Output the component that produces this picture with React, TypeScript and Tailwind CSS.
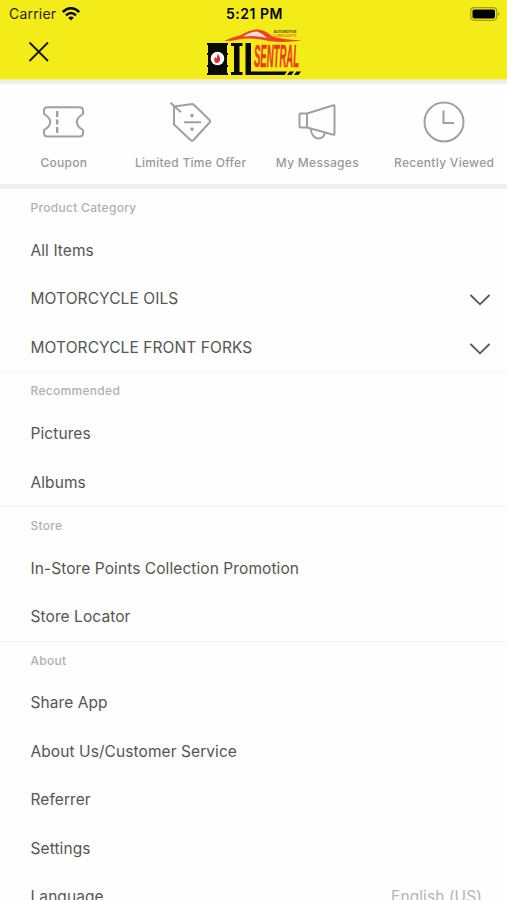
import type { ReactNode } from 'react';

interface Shortcut {
  label: string;
  icon: ReactNode;
}

interface MenuItem {
  label: string;
  expandable?: boolean;
  value?: string;
}

interface MenuSection {
  title: string;
  items: MenuItem[];
}

const shortcuts: Shortcut[] = [
  {
    label: 'Coupon',
    icon: (
      <>
        <path d="M6.500 7.200H38.500Q42 7.200 42 10.700V14Q35.800 17.500 35.800 22T42 30V33Q42 36.500 38.500 36.500H6.500Q3 36.500 3 33V30Q9.200 26.500 9.200 22T3 14V10.700Q3 7.200 6.500 7.200" />
        <path d="M16.200 11v6M16.200 19.500v5M16.200 27v6" strokeWidth="2.400" />
      </>
    ),
  },
  {
    label: 'Limited Time Offer',
    icon: (
      <>
        <path d="M6 6.500L24.500 4Q26 4.500 42 20.500Q42.500 21.500 42 22L25.500 40Q24 41.500 22.500 40L6 24.500Z" />
        <path d="M2.500 2.800L13 12.300M16 22.300h17" />
        <path d="M24 15.500v.1M24 29v.1" strokeWidth="3.600" strokeLinecap="round" />
      </>
    ),
  },
  {
    label: 'My Messages',
    icon: (
      <>
        <path d="M5 13.500h7L38.500 5.200Q39.500 5 39.500 6V34Q39.500 35 38.500 34.700L12 27.500H5.500Q4.500 27.500 4.500 26.500V14Q4.500 13.500 5 13.500ZM12 13.500v14" />
        <path d="M16 28.700c-.5 5 3 9.800 7.500 9.800 3.500 0 5.500-2.200 6.500-5.700" />
      </>
    ),
  },
  {
    label: 'Recently Viewed',
    icon: (
      <>
        <circle cx="22" cy="22" r="19.500" />
        <path d="M21.500 10.500V23H32" />
      </>
    ),
  },
];

const sections: MenuSection[] = [
  {
    title: 'Product Category',
    items: [
      { label: 'All Items' },
      { label: 'MOTORCYCLE OILS', expandable: true },
      { label: 'MOTORCYCLE FRONT FORKS', expandable: true },
    ],
  },
  {
    title: 'Recommended',
    items: [{ label: 'Pictures' }, { label: 'Albums' }],
  },
  {
    title: 'Store',
    items: [{ label: 'In-Store Points Collection Promotion' }, { label: 'Store Locator' }],
  },
  {
    title: 'About',
    items: [
      { label: 'Share App' },
      { label: 'About Us/Customer Service' },
      { label: 'Referrer' },
      { label: 'Settings' },
      { label: 'Language', value: 'English (US)' },
    ],
  },
];

function Logo() {
  return (
    <svg width="98" height="50" viewBox="0 0 98 50" className="shrink-0 overflow-visible">
      {/* Car silhouette */}
      <path d="M19 13Q28 9 36 7Q44 2 52 1.300Q60 2 67 8Q73 11 97 12.500Q78 15 64 13Q48 9 33 11.500Q27 13 19 13Z" fill="#ee4426" />
      <path d="M38 8.500Q46 3.500 52 3.500Q57 5 62 10Q50 7 38 8.500Z" fill="#f5dede" />
      <text x="68.500" y="4.500" textLength="23" lengthAdjust="spacingAndGlyphs" fontSize="4" fontWeight="700" fill="#4b4917" fontFamily="Inter, sans-serif">AUTOMOTIVE</text>
      <text x="68.500" y="9" textLength="23" lengthAdjust="spacingAndGlyphs" fontSize="4" fontWeight="600" fill="#ef7325" fontFamily="Inter, sans-serif">LUBRICANTS</text>
      {/* Oil drum */}
      <path d="M2 15h21v2h-1v8h1v2h-1v10h1v2h-1v6h1v2H2v-2h1v-6H2v-2h1V27H2v-2h1v-8H2Z" fill="#090909" />
      <circle cx="12.500" cy="30.500" r="6.800" fill="#fff" />
      <path d="M12.500 25.500q4 5 2 8q-3 3-5 0q-1-3 1-5q0 2 1 2q1-2 1-5Z" fill="#e62b24" />
      {/* Lettering */}
      <path d="M26 15h11.500v3H34.500v26h3v3H26v-3h3V18h-3ZM40.500 15h5.500v28.500h36l-2.500 3.500H40.500Z" fill="#090909" />
      <path d="M84.500 43.500h4.500l-2.500 3.500h-4.500ZM91.500 43.500h4.500l-2.500 3.500h-4.500Z" fill="#090909" />
      <text x="49" y="38.500" textLength="45" lengthAdjust="spacingAndGlyphs" fontSize="32" fontWeight="700" fontStyle="italic" fill="#e93b22" stroke="#e93b22" strokeWidth=".5" fontFamily="'Liberation Sans', sans-serif">SENTRAL</text>
    </svg>
  );
}

export default function App() {
  return (
    <div className="h-[900px] w-full overflow-hidden bg-[#fefefe] font-['Inter',sans-serif] text-[#555555]">
      <header className="h-20 border-b border-[#f3eea0] bg-[#f3ec19] text-black">
        {/* Status bar */}
        <div className="grid h-[27px] grid-cols-3 items-center pl-[9px] pr-[7px]">
          <div className="flex items-center gap-1.5 text-[14px] text-[#292808]">
            <span className="tracking-[0.2px]">Carrier</span>
            <svg width="18" height="14" viewBox="0 0 18 14" fill="none" stroke="#080800" strokeWidth="2.400">
              <path d="M.8 5Q9-2.500 17.200 5M4 8.300Q9 3.800 14 8.300" />
              <path d="M6.200 10.700Q9 8.300 11.800 10.700L9 13.500Z" fill="#080800" stroke="none" />
            </svg>
          </div>
          <span className="text-center text-[14px] font-semibold tracking-[0.5px]">5:21 PM</span>
          <svg width="30" height="14" viewBox="0 0 30 14" className="justify-self-end">
            <rect x=".7" y=".7" width="26" height="12.600" rx="3.500" fill="none" stroke="#a39d17" strokeWidth="1.200" />
            <rect x="2.500" y="2.500" width="22.500" height="9" rx="1.800" fill="#000" />
            <path d="M28 5q3 2 0 4Z" fill="#a39d17" />
          </svg>
        </div>
        <div className="grid h-[51px] grid-cols-3 items-center">
          <button aria-label="Close" className="mb-px ml-7 w-fit">
            <svg width="22" height="22" viewBox="0 0 22 22" fill="none" stroke="#17160a" strokeWidth="1.800">
              <path d="M1.500 1.500l18.500 18.500M20 1.500L1.500 20" />
            </svg>
          </button>
          <div className="flex justify-center">
            <Logo />
          </div>
        </div>
      </header>

      {/* Shortcuts */}
      <nav className="grid h-[109px] grid-cols-4 border-b-[5px] border-t-4 border-[#efefef]">
        {shortcuts.map((shortcut) => (
          <div key={shortcut.label} className="flex flex-col items-center pt-4">
            <svg
              width="44"
              height="44"
              viewBox="0 0 44 44"
              fill="none"
              stroke="#a0a0a0"
              strokeWidth="2"
              strokeLinejoin="round"
            >
              {shortcut.icon}
            </svg>
            <span className="mt-[11px] whitespace-nowrap pl-px text-[12px] font-medium leading-4 tracking-[0.3px] text-[#999999]">
              {shortcut.label}
            </span>
          </div>
        ))}
      </nav>

      {sections.map((section) => (
        <section key={section.title} className="border-b border-[#f3f3f3]">
          <h2 className="h-[36.7px] pl-[30.5px] pt-[11px] text-[12px] font-medium leading-4 tracking-[0.3px] text-[#b0b0b0]">
            {section.title}
          </h2>
          <ul>
            {section.items.map((item) => (
              <li key={item.label} className="flex h-[48.5px] items-center justify-between pl-[30.5px] pr-4 pt-px">
                <span className="text-[15.5px] tracking-[0.08px]">{item.label}</span>
                {item.expandable && (
                  <svg width="22" height="12" viewBox="0 0 22 12" fill="none" stroke="#555555" strokeWidth="1.800" className="mt-[3px]">
                    <path d="M1.500 1L11 10.300L20.500 1" />
                  </svg>
                )}
                {item.value && <span className="pr-[9px] text-[15.5px] tracking-[0.08px] text-[#b5b5b5]">{item.value}</span>}
              </li>
            ))}
          </ul>
        </section>
      ))}
    </div>
  );
}
